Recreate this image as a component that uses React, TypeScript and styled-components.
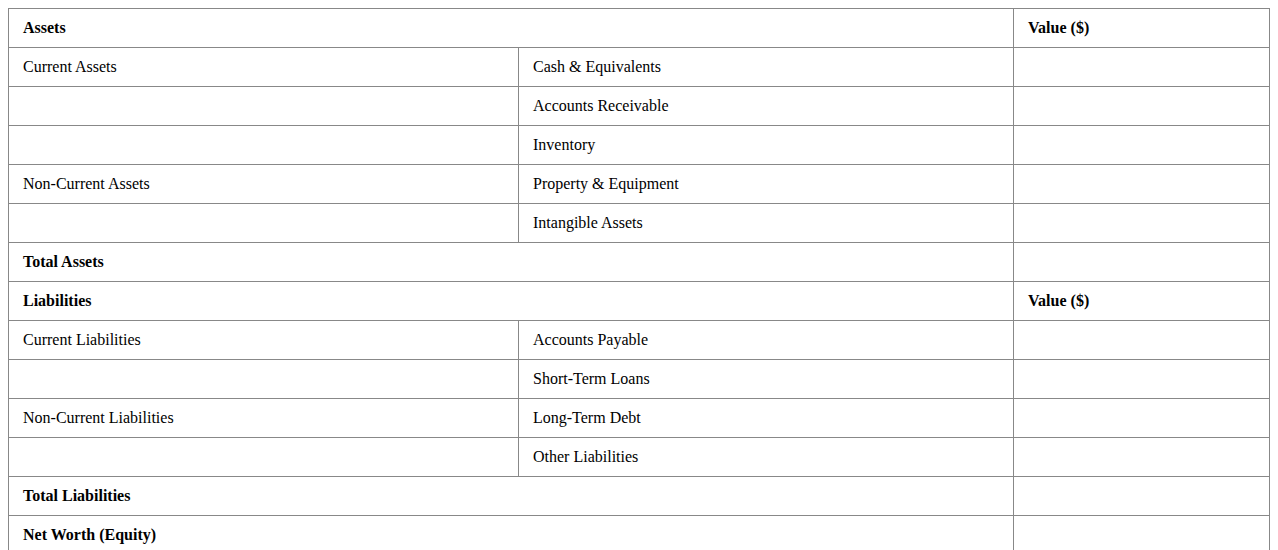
import React from "react";
import styled, { createGlobalStyle } from "styled-components";

const Global = createGlobalStyle`
  body {
    margin: 8px;
    background: #ffffff;
    font-family: "Liberation Serif", "Times New Roman", serif;
    color: #000000;
  }
`;

const Table = styled.table`
  width: 100%;
  border-collapse: collapse;
  table-layout: fixed;
  font-family: "Liberation Serif", "Times New Roman", serif;
  font-size: 16px;
`;

const Cell = styled.td<{ $bold?: boolean }>`
  border: 1px solid #888888;
  padding: 10px 14px;
  line-height: 18px;
  height: 18px;
  text-align: left;
  font-weight: ${(p) => (p.$bold ? "bold" : "normal")};
  vertical-align: middle;
`;

type Row =
  | { kind: "header"; label: string }
  | { kind: "item"; group: string; item: string }
  | { kind: "total"; label: string };

const rows: Row[] = [
  { kind: "header", label: "Assets" },
  { kind: "item", group: "Current Assets", item: "Cash & Equivalents" },
  { kind: "item", group: "", item: "Accounts Receivable" },
  { kind: "item", group: "", item: "Inventory" },
  { kind: "item", group: "Non-Current Assets", item: "Property & Equipment" },
  { kind: "item", group: "", item: "Intangible Assets" },
  { kind: "total", label: "Total Assets" },
  { kind: "header", label: "Liabilities" },
  { kind: "item", group: "Current Liabilities", item: "Accounts Payable" },
  { kind: "item", group: "", item: "Short-Term Loans" },
  { kind: "item", group: "Non-Current Liabilities", item: "Long-Term Debt" },
  { kind: "item", group: "", item: "Other Liabilities" },
  { kind: "total", label: "Total Liabilities" },
  { kind: "total", label: "Net Worth (Equity)" },
];

export default function App() {
  return (
    <>
      <Global />
      <Table>
        <colgroup>
          <col style={{ width: 510 }} />
          <col style={{ width: 495 }} />
          <col />
        </colgroup>
        <tbody>
          {rows.map((r, i) => {
            if (r.kind === "header") {
              return (
                <tr key={i}>
                  <Cell as="th" colSpan={2} $bold>
                    {r.label}
                  </Cell>
                  <Cell as="th" $bold>
                    Value ($)
                  </Cell>
                </tr>
              );
            }
            if (r.kind === "total") {
              return (
                <tr key={i}>
                  <Cell colSpan={2} $bold>
                    {r.label}
                  </Cell>
                  <Cell />
                </tr>
              );
            }
            return (
              <tr key={i}>
                <Cell>{r.group}</Cell>
                <Cell>{r.item}</Cell>
                <Cell />
              </tr>
            );
          })}
        </tbody>
      </Table>
    </>
  );
}
